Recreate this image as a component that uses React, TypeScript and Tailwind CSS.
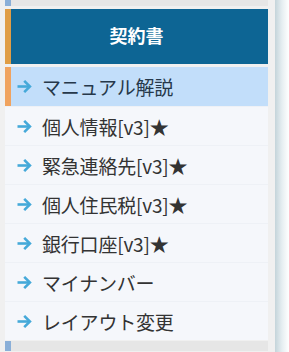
import React from "react";

const items = [
  "マニュアル解説",
  "個人情報[v3]★",
  "緊急連絡先[v3]★",
  "個人住民税[v3]★",
  "銀行口座[v3]★",
  "マイナンバー",
  "レイアウト変更",
];

function Arrow() {
  return (
    <svg width="15" height="13" viewBox="0 0 15 13" className="shrink-0">
      <path d="M0.5 6.5 H13" stroke="#45a9d9" strokeWidth="2.6" fill="none" />
      <path d="M7.2 0.9 L12.9 6.5 L7.2 12.1" stroke="#45a9d9" strokeWidth="2.6" fill="none" strokeLinejoin="miter" />
    </svg>
  );
}

export default function App() {
  return (
    <div
      className="flex h-[352px] w-[289px] bg-white overflow-hidden"
      style={{ fontFamily: '"Noto Sans CJK JP", "Noto Sans", sans-serif' }}
    >
      <div className="w-[275px] bg-[#f0f0f0] pl-[5px] pr-[7px] flex flex-col">
        <div className="h-[6px] bg-[#e6e6e6] flex">
          <div className="w-[6px] bg-[#8aafd8]" />
        </div>
        <div className="mt-[3px] h-[55px] flex bg-[#0d6594]">
          <div className="w-[6px] bg-[#e09d45]" />
          <div className="flex-1 flex items-center justify-center pr-[6px] text-white font-bold text-[18px] pb-[2px]">
            契約書
          </div>
        </div>
        <div className="mt-[3px] flex flex-col">
          {items.map((t, i) => (
            <div
              key={t}
              className={
                i === 0
                  ? "h-[39px] flex items-center bg-[#c2defa] border-l-[6px] border-[#f0a35f] pl-[6px] gap-[10px] text-[#26384a]"
                  : "h-[39px] flex items-center bg-[#f5f7fb] border-t border-[#eef1f6] pl-[12px] gap-[10px] text-[#333333]"
              }
            >
              <Arrow />
              <span className="text-[19px] leading-none tracking-[-0.2px]">{t}</span>
            </div>
          ))}
        </div>
        <div className="mt-[1px] h-[10px] bg-[#e6e6e6] flex">
          <div className="w-[6px] bg-[#8aafd8]" />
        </div>
      </div>
      <div className="w-[14px] bg-gradient-to-r from-[#c4d4da] via-[#e6eef1] to-[#ffffff]" />
    </div>
  );
}
